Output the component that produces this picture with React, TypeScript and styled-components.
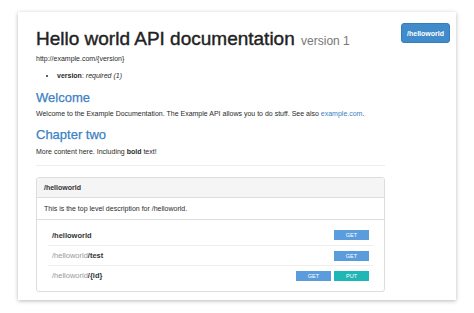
import React from "react";
import styled, { createGlobalStyle } from "styled-components";

const Global = createGlobalStyle`
  html, body { margin: 0; padding: 0; background: #ffffff; }
  body { font-family: "Liberation Sans", Arial, sans-serif; color: #333; }
  * { box-sizing: border-box; }
`;

const Page = styled.div`
  padding: 12px 18px 13px 18px;
`;

const Card = styled.div`
  display: flex;
  height: 288px;
  background: #fff;
  padding: 11px 6px 0 18px;
  box-shadow: 0 1px 4px rgba(0, 0, 0, 0.28);
`;

const Main = styled.div`
  width: 349px;
  display: flex;
  flex-direction: column;
`;

const Aside = styled.div`
  margin-left: auto;
`;

const NavButton = styled.div`
  width: 49px;
  height: 20px;
  background: #428bca;
  border-radius: 3px;
  color: #fff;
  font-size: 7px;
  font-weight: bold;
  display: flex;
  align-items: center;
  justify-content: center;
  border: 1px solid #357ebd;
`;

const Title = styled.h1`
  margin: 4px 0 0 0;
  font-size: 19px;
  line-height: 24px;
  font-weight: 500;
  color: #222;
  white-space: nowrap;
  -webkit-text-stroke: 0.4px #222;
`;

const Version = styled.small`
  font-size: 12px;
  font-weight: normal;
  color: #777;
  margin-left: 1px;
  -webkit-text-stroke: 0;
`;

const Small = styled.p<{ $top: number }>`
  margin: ${(p) => p.$top}px 0 0 0;
  font-size: 7px;
  line-height: 10px;
  color: #2a2a2a;
`;

const Params = styled.ul`
  margin: 7px 0 0 0;
  padding-left: 21px;
  font-size: 7px;
  line-height: 10px;
  color: #2a2a2a;
`;

const Heading = styled.h2<{ $top: number }>`
  margin: ${(p) => p.$top}px 0 0 0;
  font-size: 13px;
  line-height: 16px;
  font-weight: 500;
  color: #3b82c4;
  -webkit-text-stroke: 0.25px #3b82c4;
`;

const Link = styled.a`
  color: #3b82c4;
  text-decoration: none;
`;

const Rule = styled.hr`
  margin: 8px 0 0 0;
  border: 0;
  border-top: 1px solid #eee;
`;

const Panel = styled.div`
  margin-top: 11px;
  border: 1px solid #ddd;
  border-radius: 3px;
  overflow: hidden;
`;

const PanelHeader = styled.div`
  height: 20px;
  background: #f5f5f5;
  border-bottom: 1px solid #ddd;
  padding-left: 7px;
  display: flex;
  align-items: center;
  font-size: 7px;
  font-weight: bold;
  color: #333;
`;

const PanelBody = styled.div`
  height: 22px;
  padding-left: 7px;
  display: flex;
  align-items: center;
  font-size: 7px;
  color: #2a2a2a;
  border-bottom: 1px solid #ddd;
`;

const Routes = styled.div`
  padding: 5px 11px 6px 11px;
`;

const Route = styled.div`
  height: 20px;
  display: flex;
  align-items: center;
  padding: 0 4px;
  font-size: 7.5px;
  & + & {
    border-top: 1px solid #eee;
  }
`;

const Base = styled.span<{ $muted: boolean }>`
  color: ${(p) => (p.$muted ? "#999" : "#333")};
  font-weight: ${(p) => (p.$muted ? "normal" : "bold")};
`;

const Rest = styled.span`
  font-weight: bold;
  color: #333;
`;

const Methods = styled.div`
  margin-left: auto;
  display: flex;
  gap: 3px;
`;

const Method = styled.span<{ $kind: "GET" | "PUT" }>`
  width: 35px;
  height: 10px;
  display: flex;
  align-items: center;
  justify-content: center;
  font-size: 5.5px;
  color: #fff;
  background: ${(p) => (p.$kind === "GET" ? "#5a9cdc" : "#1fb6b6")};
`;

const routes: { muted: boolean; rest: string; methods: ("GET" | "PUT")[] }[] = [
  { muted: false, rest: "", methods: ["GET"] },
  { muted: true, rest: "/test", methods: ["GET"] },
  { muted: true, rest: "/{id}", methods: ["GET", "PUT"] },
];

export default function App() {
  return (
    <>
      <Global />
      <Page>
        <Card>
          <Main>
            <Title>
              Hello world API documentation <Version>version 1</Version>
            </Title>
            <Small $top={1}>http://example.com/{"{version}"}</Small>
            <Params>
              <li>
                <b>version</b>: <i>required (1)</i>
              </li>
            </Params>
            <Heading $top={9}>Welcome</Heading>
            <Small $top={3}>
              Welcome to the Example Documentation. The Example API allows you to do stuff. See also{" "}
              <Link>example.com</Link>.
            </Small>
            <Heading $top={8}>Chapter two</Heading>
            <Small $top={4}>
              More content here. Including <b>bold</b> text!
            </Small>
            <Rule />
            <Panel>
              <PanelHeader>/helloworld</PanelHeader>
              <PanelBody>This is the top level description for /helloworld.</PanelBody>
              <Routes>
                {routes.map((r, i) => (
                  <Route key={i}>
                    <Base $muted={r.muted}>/helloworld</Base>
                    {r.rest && <Rest>{r.rest}</Rest>}
                    <Methods>
                      {r.methods.map((m) => (
                        <Method key={m} $kind={m}>
                          {m}
                        </Method>
                      ))}
                    </Methods>
                  </Route>
                ))}
              </Routes>
            </Panel>
          </Main>
          <Aside>
            <NavButton>/helloworld</NavButton>
          </Aside>
        </Card>
      </Page>
    </>
  );
}
